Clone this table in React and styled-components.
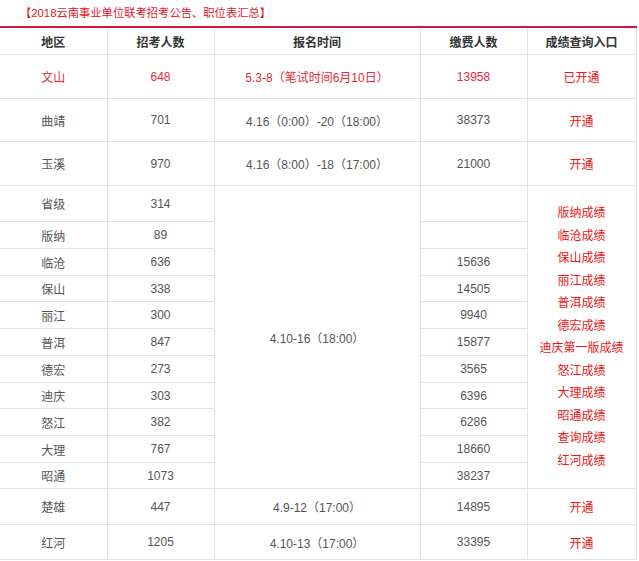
import React from "react";
import styled, { createGlobalStyle } from "styled-components";

const GlobalStyle = createGlobalStyle`
  html, body {
    margin: 0;
    padding: 0;
    background: #ffffff;
  }
  body {
    font-family: "Liberation Sans", Arial, "Noto Sans CJK SC", sans-serif;
  }
`;

const Page = styled.div`
  width: 639px;
  height: 561px;
  overflow: hidden;
  background: #fff;
`;

const Title = styled.div`
  height: 26px;
  line-height: 26px;
  font-size: 11.3px;
  color: #e4172c;
  font-family: "Liberation Sans", "Noto Sans CJK SC", sans-serif;
`;

const TitleText = styled.span`
  display: inline-block;
  margin-left: 20px;
`;

const Table = styled.table`
  width: 636px;
  border-collapse: collapse;
  table-layout: fixed;
  border-top: 2px solid #d8143a;
  font-size: 12px;
  color: #555;
`;

const Th = styled.th`
  height: 26px;
  font-weight: bold;
  color: #333;
  border: 1px solid #e2e2e2;
  border-top: none;
  padding: 0;
  &:first-child {
    border-left: none;
  }
`;

const Row = styled.tr`
  height: ${({ h }) => h}px;
`;

const Td = styled.td`
  text-align: center;
  vertical-align: middle;
  padding: 0;
  border: 1px solid #e2e2e2;
  color: ${({ red }) => (red ? "#e8283c" : "#555")};
  &:first-child {
    border-left: none;
  }
`;

const LinkText = styled.span`
  color: #f01414;
`;

const LinkList = styled.div`
  display: flex;
  flex-direction: column;
  align-items: center;
  line-height: 22.5px;
  color: #f01414;
`;

const top = [
  { area: "文山", num: "648", time: "5.3-8（笔试时间6月10日）", paid: "13958", link: "已开通", red: true, h: 44 },
  { area: "曲靖", num: "701", time: "4.16（0:00）-20（18:00）", paid: "38373", link: "开通", h: 43 },
  { area: "玉溪", num: "970", time: "4.16（8:00）-18（17:00）", paid: "21000", link: "开通", h: 44 },
];

const middle = [
  { area: "省级", num: "314", paid: "", h: 36 },
  { area: "版纳", num: "89", paid: "", h: 27 },
  { area: "临沧", num: "636", paid: "15636", h: 27 },
  { area: "保山", num: "338", paid: "14505", h: 26 },
  { area: "丽江", num: "300", paid: "9940", h: 27 },
  { area: "普洱", num: "847", paid: "15877", h: 27 },
  { area: "德宏", num: "273", paid: "3565", h: 27 },
  { area: "迪庆", num: "303", paid: "6396", h: 26 },
  { area: "怒江", num: "382", paid: "6286", h: 27 },
  { area: "大理", num: "767", paid: "18660", h: 27 },
  { area: "昭通", num: "1073", paid: "38237", h: 26 },
];

const links = [
  "版纳成绩",
  "临沧成绩",
  "保山成绩",
  "丽江成绩",
  "普洱成绩",
  "德宏成绩",
  "迪庆第一版成绩",
  "怒江成绩",
  "大理成绩",
  "昭通成绩",
  "查询成绩",
  "红河成绩",
];

const bottom = [
  { area: "楚雄", num: "447", time: "4.9-12（17:00）", paid: "14895", link: "开通", h: 36 },
  { area: "红河", num: "1205", time: "4.10-13（17:00）", paid: "33395", link: "开通", h: 35 },
];

const SimpleRow = ({ r }) => (
  <Row h={r.h}>
    <Td red={r.red}>{r.area}</Td>
    <Td red={r.red}>{r.num}</Td>
    <Td red={r.red}>{r.time}</Td>
    <Td red={r.red}>{r.paid}</Td>
    <Td>
      <LinkText>{r.link}</LinkText>
    </Td>
  </Row>
);

export default function App() {
  return (
    <Page>
      <GlobalStyle />
      <Title>
        <TitleText>【2018云南事业单位联考招考公告、职位表汇总】</TitleText>
      </Title>
      <Table>
        <colgroup>
          <col style={{ width: 107 }} />
          <col style={{ width: 107 }} />
          <col style={{ width: 206 }} />
          <col style={{ width: 107 }} />
          <col style={{ width: 109 }} />
        </colgroup>
        <thead>
          <tr>
            <Th>地区</Th>
            <Th>招考人数</Th>
            <Th>报名时间</Th>
            <Th>缴费人数</Th>
            <Th>成绩查询入口</Th>
          </tr>
        </thead>
        <tbody>
          {top.map((r) => (
            <SimpleRow key={r.area} r={r} />
          ))}
          {middle.map((r, i) => (
            <Row key={r.area} h={r.h}>
              <Td>{r.area}</Td>
              <Td>{r.num}</Td>
              {i === 0 && <Td rowSpan={middle.length}>4.10-16（18:00）</Td>}
              <Td>{r.paid}</Td>
              {i === 0 && (
                <Td rowSpan={middle.length}>
                  <LinkList>
                    {links.map((l) => (
                      <span key={l}>{l}</span>
                    ))}
                  </LinkList>
                </Td>
              )}
            </Row>
          ))}
          {bottom.map((r) => (
            <SimpleRow key={r.area} r={r} />
          ))}
        </tbody>
      </Table>
    </Page>
  );
}
